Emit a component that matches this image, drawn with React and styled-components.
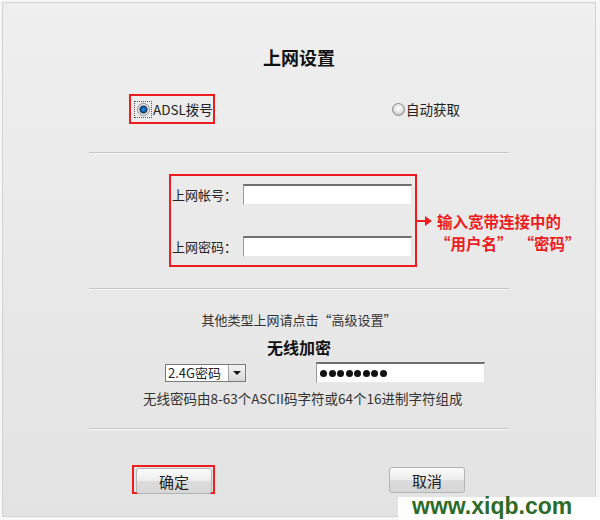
import React from "react";
import styled, { createGlobalStyle } from "styled-components";

const Global = createGlobalStyle`
  html, body { margin: 0; padding: 0; background: #f6f6f6; }
  body { font-family: "Noto Sans CJK SC", "Liberation Sans", sans-serif; color: #222; }
  * { box-sizing: border-box; }
`;

const CJK = `"Noto Sans CJK SC", "Liberation Sans", sans-serif`;

const Frame = styled.div`
  position: relative;
  width: 600px;
  height: 520px;
  padding: 2px 4px 3px 2px;
  background: #f6f6f6;
  display: flex;
`;

const Panel = styled.div`
  flex: 1;
  border: 1px solid #d2d2d2;
  background: linear-gradient(#efefef, #e3e3e3);
  display: flex;
  flex-direction: column;
  font-family: ${CJK};
`;

const Title = styled.div`
  margin-top: ${p => p.$mt}px;
  text-align: center;
  font-size: ${p => p.$size}px;
  line-height: ${p => p.$lh}px;
  font-weight: 700;
  color: #111;
`;

const RadioRow = styled.div`
  margin-top: 25px;
  margin-left: 126px;
  display: flex;
  align-items: center;
  height: 30px;
`;

const Highlight = styled.div`
  border: 2px solid #ee1c1c;
  display: flex;
  align-items: center;
  height: ${p => p.$h}px;
  width: ${p => p.$w}px;
  padding: 0 0 0 3px;
`;

const RadioItem = styled.div`
  display: flex;
  align-items: center;
  font-size: 13.5px;
  line-height: 20px;
  color: #222;
  margin-left: ${p => p.$ml || 0}px;
`;

const Focus = styled.span`
  display: inline-flex;
  align-items: center;
  justify-content: center;
  width: 18px;
  height: 17px;
  border: 1px dotted #555;
  margin-right: 1px;
`;

const RadioDot = styled.span`
  display: inline-block;
  width: 13px;
  height: 13px;
  border-radius: 50%;
  border: 1px solid #8a8a8a;
  background: ${p =>
    p.$on
      ? "radial-gradient(circle at 50% 50%, #2a8fe0 0, #0b5fb0 2.5px, #1a2b44 3.5px, #dfe6ee 4.5px, #f6f6f6 6px)"
      : "radial-gradient(circle at 50% 40%, #ffffff 0, #e6e6e6 4px, #c9c9c9 6px)"};
  margin-right: ${p => (p.$on ? 0 : 1)}px;
`;

const Separator = styled.div`
  margin-top: ${p => p.$mt}px;
  align-self: center;
  width: 420px;
  height: 2px;
  border-top: 1px solid #c6c6c6;
  border-bottom: 1px solid #f7f7f7;
`;

const CredRow = styled.div`
  margin-top: 20px;
  margin-left: 166px;
  display: flex;
  align-items: flex-start;
`;

const CredBox = styled.div`
  width: 248px;
  height: 93px;
  border: 2px solid #ee1c1c;
  padding: 8px 3px 8px 1px;
  display: flex;
  flex-direction: column;
  gap: 31px;
`;

const Field = styled.div`
  display: flex;
  align-items: center;
  height: 21px;
`;

const Label = styled.span`
  width: 71px;
  font-size: 13px;
  line-height: 21px;
  color: #222;
  white-space: nowrap;
`;

const TextBox = styled.div`
  width: ${p => p.$w}px;
  height: 21px;
  background: #fff;
  border-top: 2px solid #6e6e6e;
  border-left: 1px solid #9a9a9a;
  border-right: 1px solid #e2e2e2;
  border-bottom: 1px solid #e8e8e8;
  display: flex;
  align-items: center;
  padding-left: 3px;
  gap: 1.5px;
`;

const Note = styled.div`
  margin-top: 36px;
  display: flex;
  flex-direction: column;
  color: #ee1c1c;
  font-weight: 700;
  font-size: 15.5px;
  line-height: 22px;
  font-family: ${CJK};
`;

const NoteLine = styled.div`
  display: flex;
  align-items: center;
  gap: ${p => p.$gap || 0}px;
  padding-left: ${p => p.$pl || 0}px;
  white-space: nowrap;
`;

const Info = styled.div`
  margin-top: ${p => p.$mt}px;
  margin-left: ${p => p.$ml || 0}px;
  text-align: ${p => (p.$ml ? "left" : "center")};
  font-size: ${p => p.$size}px;
  line-height: ${p => p.$lh}px;
  color: #333;
  white-space: nowrap;
`;

const WifiRow = styled.div`
  margin-top: 4px;
  margin-left: 162px;
  display: flex;
  align-items: center;
  height: 21px;
`;

const Select = styled.div`
  width: 81px;
  height: 18px;
  background: #fff;
  border: 1px solid #7a7a7a;
  display: flex;
  align-items: center;
  justify-content: space-between;
  font-size: 13px;
  line-height: 16px;
  padding-left: 2px;
  margin-right: 70px;
`;

const SelectBtn = styled.span`
  width: 17px;
  height: 16px;
  background: linear-gradient(#f4f4f4, #d8d8d8);
  border-left: 1px solid #a0a0a0;
  display: flex;
  align-items: center;
  justify-content: center;
  &::after {
    content: "";
    border-left: 4px solid transparent;
    border-right: 4px solid transparent;
    border-top: 4px solid #111;
  }
`;

const Bullet = styled.span`
  width: 7px;
  height: 7px;
  border-radius: 50%;
  background: #111;
`;

const ButtonRow = styled.div`
  margin-top: 35px;
  margin-left: 129px;
  display: flex;
  align-items: center;
`;

const BtnFrame = styled.div`
  border: 2px solid #ee1c1c;
  padding: 1px 1px 0 2px;
  height: 29px;
`;

const Button = styled.button`
  width: 76px;
  height: 26px;
  border: 1px solid #b4b4b4;
  border-radius: 3px;
  background: linear-gradient(#fbfbfb 0%, #ececec 50%, #dcdcdc 51%, #d6d6d6 100%);
  font-family: ${CJK};
  font-size: 15px;
  color: #222;
  padding: 0;
  margin-left: ${p => p.$ml || 0}px;
  margin-top: ${p => p.$mt || 0}px;
`;

const Watermark = styled.div`
  position: absolute;
  right: 0;
  bottom: 0;
  width: 202px;
  height: 23px;
  background: #fff;
  padding-left: 14px;
  font-family: "Liberation Sans", Arial, sans-serif;
  font-weight: 700;
  font-size: 23px;
  line-height: 19px;
  color: #2d6b28;
  white-space: nowrap;
`;

const Arrow = () => (
  <svg width="16" height="10" viewBox="0 0 16 10" style={{ marginRight: 4 }}>
    <line x1="0" y1="5" x2="9" y2="5" stroke="#ee1c1c" strokeWidth="2" />
    <polygon points="8,0 15,5 8,10" fill="#ee1c1c" />
  </svg>
);

export default function App() {
  return (
    <>
      <Global />
      <Frame>
        <Panel>
          <Title $mt={42} $size={18} $lh={24}>上网设置</Title>
          <RadioRow>
            <Highlight $w={86} $h={30}>
              <RadioItem>
                <Focus><RadioDot $on /></Focus>ADSL拨号
              </RadioItem>
            </Highlight>
            <RadioItem $ml={177}>
              <RadioDot />自动获取
            </RadioItem>
          </RadioRow>
          <Separator $mt={28} />
          <CredRow>
            <CredBox>
              <Field>
                <Label>上网帐号：</Label>
                <TextBox $w={170} />
              </Field>
              <Field>
                <Label>上网密码：</Label>
                <TextBox $w={170} />
              </Field>
            </CredBox>
            <Note>
              <NoteLine><Arrow />输入宽带连接中的</NoteLine>
              <NoteLine $pl={18} $gap={6}>
                <span>“用户名”</span>
                <span>“密码”</span>
              </NoteLine>
            </Note>
          </CredRow>
          <Separator $mt={21} />
          <Info $mt={20} $size={13} $lh={20}>其他类型上网请点击“高级设置”</Info>
          <Title $mt={6} $size={16} $lh={22}>无线加密</Title>
          <WifiRow>
            <Select>
              2.4G密码
              <SelectBtn />
            </Select>
            <TextBox $w={169}>
              {Array.from({ length: 8 }).map((_, i) => (
                <Bullet key={i} />
              ))}
            </TextBox>
          </WifiRow>
          <Info $mt={6} $ml={140} $size={13.5} $lh={18}>
            无线密码由8-63个ASCII码字符或64个16进制字符组成
          </Info>
          <Separator $mt={21} />
          <ButtonRow>
            <BtnFrame>
              <Button>确定</Button>
            </BtnFrame>
            <Button $ml={174} $mt={1}>取消</Button>
          </ButtonRow>
        </Panel>
        <Watermark>www.xiqb.com</Watermark>
      </Frame>
    </>
  );
}
